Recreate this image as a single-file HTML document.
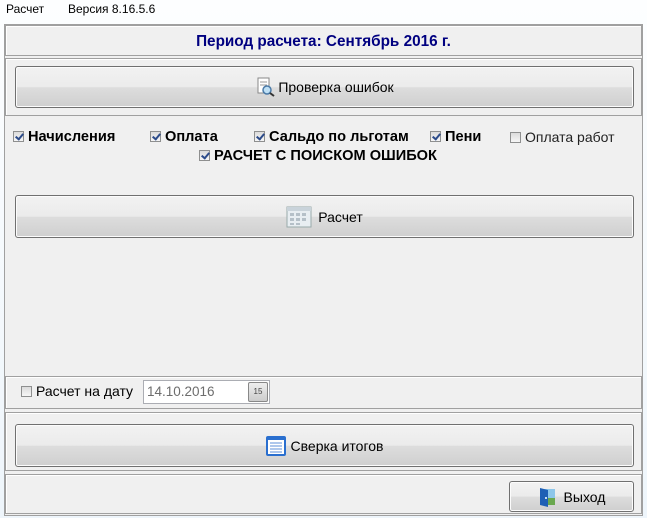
<!DOCTYPE html>
<html><head><meta charset="utf-8"><style>
*{margin:0;padding:0;box-sizing:border-box}
body{width:647px;height:518px;overflow:hidden;background:linear-gradient(#fdfeff,#eef5fb);font-family:"Liberation Sans",sans-serif;position:relative;font-size:12px}
.a{position:absolute}
.win{left:4px;top:24px;width:639px;height:492px;background:#f0f0f0;border:1px solid #a0a0a0}
.pnl{position:absolute;left:5px;width:637px;border:1px solid #a0a0a0;box-shadow:inset 1px 1px 0 #fff}
.btn{position:absolute;border:1px solid #707070;border-radius:3px;background:linear-gradient(#f2f2f2 0%,#ebebeb 50%,#dddddd 51%,#cfcfcf 100%);box-shadow:inset 0 0 0 1px #fcfcfc;display:flex;align-items:center;justify-content:center;font-size:14px;color:#000}
.cb{display:inline-block;width:11px;height:11px;border:1px solid #8e8f8f;background:linear-gradient(#dcdcdc,#f6f6f6);vertical-align:-1px;margin-right:4px;position:relative}
.cb.c::after{content:"";position:absolute;left:3px;top:0px;width:3px;height:6px;border:solid #2c4b8a;border-width:0 2px 2px 0;transform:rotate(40deg)}
.lbl{position:absolute;font-weight:bold;font-size:14.6px;top:129px;white-space:nowrap}
</style></head><body>
<div class="a" style="left:6px;top:2px;font-size:12px">Расчет</div>
<div class="a" style="left:68px;top:2px;font-size:12px">Версия 8.16.5.6</div>
<div class="a win"></div>
<div class="pnl" style="top:25px;height:31px"></div>
<div class="a" style="left:0;width:647px;top:33px;text-align:center;font-weight:bold;color:#000080;font-size:15.3px">Период расчета: Сентябрь 2016 г.</div>
<div class="pnl" style="top:58px;height:58px"></div>
<div class="btn" style="left:15px;top:66px;width:619px;height:42px"><svg width="20" height="20" style="margin-right:3px"><rect x="3" y="1" width="11" height="15" fill="#fff" stroke="#888"/><line x1="5" y1="5" x2="12" y2="5" stroke="#999"/><line x1="5" y1="8" x2="12" y2="8" stroke="#999"/><circle cx="12" cy="13" r="4" fill="#bfe0f5" stroke="#4a7aa8" stroke-width="1.5"/><line x1="15" y1="16" x2="19" y2="19" stroke="#333" stroke-width="2"/></svg>Проверка ошибок</div>
<div class="lbl" style="left:13px"><span class="cb c"></span>Начисления</div>
<div class="lbl" style="left:150px"><span class="cb c"></span>Оплата</div>
<div class="lbl" style="left:254px"><span class="cb c"></span>Сальдо по льготам</div>
<div class="lbl" style="left:430px"><span class="cb c"></span>Пени</div>
<div class="lbl" style="left:510px;font-weight:normal;color:#222;font-size:14px"><span class="cb"></span>Оплата работ</div>
<div class="lbl" style="left:199px;top:148px"><span class="cb c"></span>РАСЧЕТ С ПОИСКОМ ОШИБОК</div>
<div class="btn" style="left:15px;top:195px;width:619px;height:43px"><svg width="26" height="24" style="margin-right:6px"><rect x="1" y="2" width="24" height="20" fill="#e8eef2" stroke="#9aa"/><rect x="1" y="2" width="24" height="4" fill="#c9d3da"/><g fill="#b5c0c8"><rect x="4" y="8" width="4" height="3"/><rect x="10" y="8" width="4" height="3"/><rect x="16" y="8" width="4" height="3"/><rect x="4" y="13" width="4" height="3"/><rect x="10" y="13" width="4" height="3"/><rect x="16" y="13" width="4" height="3"/><rect x="4" y="18" width="4" height="2"/><rect x="10" y="18" width="4" height="2"/></g></svg>Расчет</div>
<div class="pnl" style="top:376px;height:33px"></div>
<div class="a" style="left:21px;top:383px;font-size:14px"><span class="cb"></span>Расчет на дату</div>
<div class="a" style="left:143px;top:380px;width:127px;height:24px;border:1px solid #abadb3;background:#fff;color:#6d6d6d;font-size:13.5px;padding:3px 0 0 3px">14.10.2016</div>
<div class="a" style="left:248px;top:382px;width:20px;height:20px;border:1px solid #888;border-radius:2px;background:linear-gradient(#eee,#ccc);font-size:8px;text-align:center;line-height:18px;color:#444">15</div>
<div class="pnl" style="top:412px;height:59px"></div>
<div class="btn" style="left:15px;top:424px;width:619px;height:43px"><svg width="20" height="20" style="margin-right:5px"><rect x="1" y="1" width="18" height="18" rx="1" fill="#fff" stroke="#2a6fcf" stroke-width="2"/><rect x="1" y="1" width="18" height="3" fill="#2a6fcf"/><g stroke="#5c8fd8"><line x1="4" y1="7" x2="16" y2="7"/><line x1="4" y1="10" x2="16" y2="10"/><line x1="4" y1="13" x2="16" y2="13"/><line x1="4" y1="16" x2="16" y2="16"/></g></svg>Сверка итогов</div>
<div class="pnl" style="top:474px;height:40px"></div>
<div class="btn" style="left:509px;top:481px;width:125px;height:31px"><svg width="20" height="22" style="margin-right:6px"><rect x="5" y="3" width="12" height="16" fill="#8dc6ea"/><rect x="5" y="12" width="12" height="7" fill="#6aa84f"/><path d="M2 2 L10 4 L10 21 L2 19Z" fill="#1f5fb5"/><circle cx="8" cy="12" r="1" fill="#fff"/></svg>Выход</div>
</body></html>
